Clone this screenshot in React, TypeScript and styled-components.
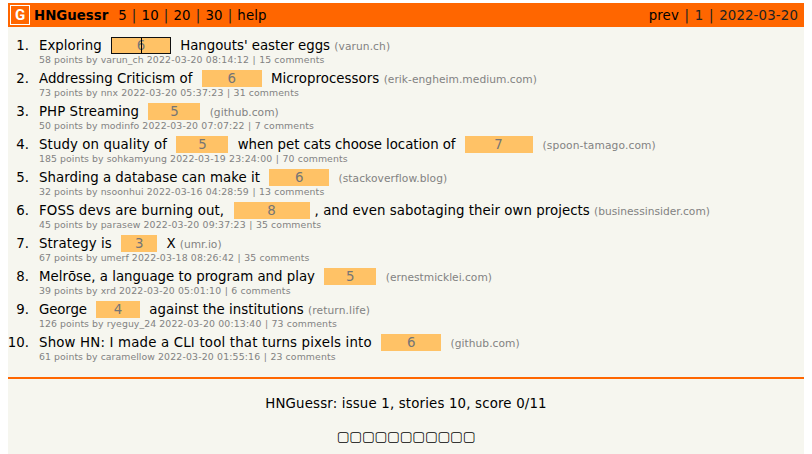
import React from "react";
import styled, { createGlobalStyle } from "styled-components";

const Global = createGlobalStyle`
  body { margin: 0; background: #fff; font-family: "DejaVu Sans", Verdana, sans-serif; }
`;
const Page = styled.main`
  box-sizing: border-box; width: 796px; height: 451px; margin: 3px 8px 0;
  background: #f6f6ef; color: #000; font-size: 13.333px; overflow: hidden;
`;
const Header = styled.header`
  display: flex; align-items: center; height: 24px; padding: 0 6px 0 2px;
  box-sizing: border-box; background: #ff6600; white-space: pre;
`;
const Logo = styled.span`
  box-sizing: border-box; width: 20px; height: 20px; border: 1px solid #fff;
  color: #fff; font: 700 15px/19px Roboto, sans-serif; text-align: center; margin-right: 4px;
`;
const Brand = styled.b`margin-right: 10px;`;
const Nav = styled.nav`color: #222; letter-spacing: 0.14px; word-spacing: 0.65px;`;
const Dates = styled(Nav)`margin-left: auto; word-spacing: 1.2px;`;
const Link = styled.span`color: #000;`;
const List = styled.ol`list-style: none; margin: 0; padding: 9px 0 0; height: 350px; box-sizing: border-box;`;
const Story = styled.li`display: grid; grid-template-columns: 21px 1fr; column-gap: 10px; height: 33px;`;
const Rank = styled.span`justify-self: end; line-height: 20px; white-space: nowrap;`;
const Title = styled.div`display: flex; height: 18px; line-height: 20px; white-space: pre;`;
const Text = styled.span<{ $track?: number }>`letter-spacing: ${p => p.$track ?? 0}px;`;
const Site = styled(Text)`font-size: 10.667px; line-height: 22px; color: #828282;`;
const Blank = styled.span<{ $w: number; $focus?: boolean }>`
  box-sizing: border-box; width: ${p => p.$w}px; height: 17px; margin: 1px 5px 0;
  background: #ffc266; color: #757575; text-align: center; line-height: 17px; position: relative;
  outline: ${p => (p.$focus ? "1px solid #101010" : "none")}; outline-offset: -1px;
`;
const Caret = styled.i`position: absolute; left: 30px; top: 1px; width: 1px; height: 15px; background: #000;`;
const Meta = styled.div`font-size: 9.333px; line-height: 11px; color: #828282; white-space: pre; letter-spacing: 0.06px;`;
const Stamp = styled.span`letter-spacing: 0.17px;`;
const Divider = styled.span`word-spacing: 0.4px;`;
const Comments = styled.span`letter-spacing: 0.12px;`;
const Footer = styled.footer`
  border-top: 2px solid #ff6600; display: flex; flex-direction: column; align-items: center;
  padding-top: 16px; gap: 16px; line-height: 17px;
`;
const Score = styled.div`letter-spacing: 0.17px;`;

type Part = { t: string; k?: number } | { n: number; w: number; focus?: boolean };
type StoryData = { parts: Part[]; site: string; siteTrack?: number; by: string; at: string; comments: string };
const stories: StoryData[] = [
  { parts: [{ t: "Exploring " }, { n: 6, w: 60, focus: true }, { t: " Hangouts' easter eggs " , k: -0.02 }], site: "varun.ch", siteTrack: 0.08, by: "58 points by varun_ch", at: "2022-03-20 08:14:12", comments: "15 comments" },
  { parts: [{ t: "Addressing Criticism of " }, { n: 6, w: 60 }, { t: " Microprocessors ", k: 0.05 }], site: "erik-engheim.medium.com", siteTrack: 0.04, by: "73 points by nnx", at: "2022-03-20 05:37:23", comments: "31 comments" },
  { parts: [{ t: "PHP Streaming ", k: 0.07 }, { n: 5, w: 52 }, { t: " " }], site: "github.com", siteTrack: 0.04, by: "50 points by modinfo", at: "2022-03-20 07:07:22", comments: "7 comments" },
  { parts: [{ t: "Study on quality of ", k: 0.1 }, { n: 5, w: 52 }, { t: " when pet cats choose location of ", k: -0.06 }, { n: 7, w: 68 }, { t: " ", k: 0.7 }], site: "spoon-tamago.com", siteTrack: 0.12, by: "185 points by sohkamyung", at: "2022-03-19 23:24:00", comments: "70 comments" },
  { parts: [{ t: "Sharding a database can make it ", k: 0.03 }, { n: 6, w: 60 }, { t: " " }], site: "stackoverflow.blog", siteTrack: 0.07, by: "32 points by nsoonhui", at: "2022-03-16 04:28:59", comments: "13 comments" },
  { parts: [{ t: "FOSS devs are burning out, ", k: 0.11 }, { n: 8, w: 76 }, { t: ", and even sabotaging their own projects ", k: 0.045 }], site: "businessinsider.com", by: "45 points by parasew", at: "2022-03-20 09:37:23", comments: "35 comments" },
  { parts: [{ t: "Strategy is ", k: 0.08 }, { n: 3, w: 36 }, { t: " X " }], site: "umr.io", by: "67 points by umerf", at: "2022-03-18 08:26:42", comments: "35 comments" },
  { parts: [{ t: "Melrōse, a language to program and play ", k: 0.01 }, { n: 5, w: 52 }, { t: " ", k: 0.3 }], site: "ernestmicklei.com", by: "39 points by xrd", at: "2022-03-20 05:01:10", comments: "6 comments" },
  { parts: [{ t: "George ", k: -0.12 }, { n: 4, w: 44 }, { t: " against the institutions ", k: 0.03 }], site: "return.life", siteTrack: 0.13, by: "126 points by ryeguy_24", at: "2022-03-20 00:13:40", comments: "73 comments" },
  { parts: [{ t: "Show HN: I made a CLI tool that turns pixels into ", k: 0.18 }, { n: 6, w: 60 }, { t: " " }], site: "github.com", siteTrack: 0.04, by: "61 points by caramellow", at: "2022-03-20 01:55:16", comments: "23 comments" },
];

export default function App() {
  return (
    <>
      <Global />
      <Page>
        <Header>
          <Logo>G</Logo><Brand>HNGuessr</Brand>
          <Nav><Link>5</Link> | <Link>10</Link> | <Link>20</Link> | <Link>30</Link> | <Link>help</Link></Nav>
          <Dates><Link>prev</Link> | 1 | 2022-03-20</Dates>
        </Header>
        <List>
          {stories.map((s, i) => (
            <Story key={i}>
              <Rank>{i + 1}.</Rank>
              <div>
                <Title>
                  {s.parts.map((p, j) => "t" in p ? <Text key={j} $track={p.k}>{p.t}</Text> : (
                    <Blank key={j} $w={p.w} $focus={p.focus}>{p.n}{p.focus && <Caret />}</Blank>
                  ))}
                  <Site $track={s.siteTrack}>({s.site})</Site>
                </Title>
                <Meta>{s.by} <Stamp>{s.at}</Stamp><Divider> | </Divider><Comments>{s.comments}</Comments></Meta>
              </div>
            </Story>
          ))}
        </List>
        <Footer>
          <Score>HNGuessr: issue 1, stories 10, score 0/11</Score>
          <div>{"▢".repeat(11)}</div>
        </Footer>
      </Page>
    </>
  );
}
